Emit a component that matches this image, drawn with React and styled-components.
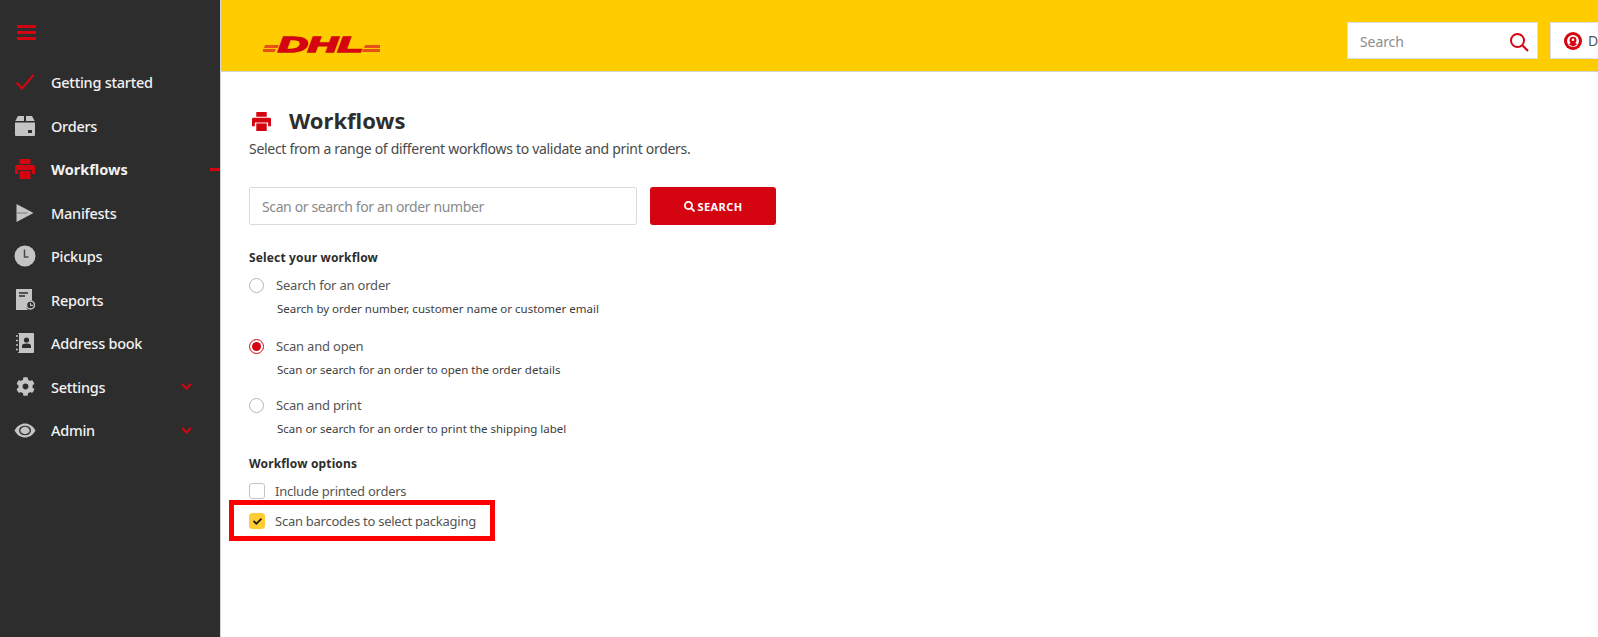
import React from 'react';
import styled, { createGlobalStyle } from 'styled-components';
import { FaSearch, FaCog, FaCheck } from 'react-icons/fa';

const FONT = '"Noto Sans", "Open Sans", sans-serif';
const RED = '#d40511';
const GREY_ICON = '#c4c4c4';

const GlobalStyle = createGlobalStyle`
  html, body {
    margin: 0;
    padding: 0;
    height: 100%;
    overflow: hidden;
    background: #fff;
    font-family: ${FONT};
  }
  * { box-sizing: border-box; }
`;

const Page = styled.div`
  position: relative;
  display: flex;
  width: 1598px;
  height: 637px;
  overflow: hidden;
`;

const Sidebar = styled.nav`
  flex: none;
  width: 221px;
  height: 100%;
  background: #2d2d2d;
  border-right: 1px solid #d6d6d6;
  padding-top: 24px;
`;

const MenuButton = styled.div`
  display: flex;
  flex-direction: column;
  gap: 3px;
  width: 19px;
  margin: 1px 0 20.5px 17px;
  span {
    height: 3px;
    background: ${RED};
  }
`;

const NavItem = styled.div`
  position: relative;
  display: flex;
  align-items: center;
  height: 43.5px;
  padding-left: 14px;
  color: #f2f2f2;
  font-size: 14.5px;
  font-weight: ${props => (props.$active ? 700 : 500)};
  letter-spacing: ${props => (props.$active ? '0' : '-0.26px')};
`;

const NavIcon = styled.span`
  display: flex;
  align-items: center;
  justify-content: center;
  width: 22px;
  height: 24px;
  margin-right: 15px;
  color: ${props => (props.$red ? RED : GREY_ICON)};
`;

const NavLabel = styled.span`
  flex: 1;
`;

const ChevronWrap = styled.span`
  display: flex;
  margin-right: 28px;
`;

const ActiveTick = styled.span`
  position: absolute;
  right: 0;
  top: 20px;
  width: 10px;
  height: 3px;
  background: ${RED};
`;

const Main = styled.div`
  flex: 1;
  min-width: 0;
  display: flex;
  flex-direction: column;
`;

const Header = styled.header`
  display: flex;
  align-items: flex-start;
  justify-content: space-between;
  height: 72px;
  flex: none;
  background: #ffcc00;
  border-bottom: 1px solid #d3d3d3;
  padding: 22px 0 0 42px;
  overflow: hidden;
`;

const Logo = styled.svg`
  display: block;
  margin-top: 14px;
`;

const HeaderRight = styled.div`
  display: flex;
  gap: 12px;
  width: 251px;
  flex: none;
  margin-left: auto;
`;

const HeaderBox = styled.div`
  flex: none;
  display: flex;
  align-items: center;
  height: 37px;
  background: #fff;
  border: 1px solid #d8dfe8;
  color: #555;
  font-size: 14px;
`;

const HeaderSearch = styled(HeaderBox)`
  width: 191px;
  justify-content: space-between;
  padding: 2px 8px 0 12px;
  color: #8c8c8c;
  letter-spacing: -0.1px;
`;

const UserBox = styled(HeaderBox)`
  width: 80px;
  padding-left: 13px;
  gap: 6px;
`;

const Content = styled.main`
  padding: 35px 0 0 28px;
`;

const TitleRow = styled.div`
  display: flex;
  align-items: center;
  height: 26px;
  padding-left: 3px;
`;

const TitleIcon = styled.span`
  display: flex;
  width: 37px;
  margin-top: 2px;
  color: ${RED};
`;

const Title = styled.h1`
  margin: 0;
  font-size: 22px;
  line-height: 26px;
  font-weight: 700;
  color: #2d2d2d;
`;

const Subtitle = styled.p`
  margin: 0;
  padding-top: 6px;
  font-size: 14px;
  line-height: 20px;
  letter-spacing: -0.3px;
  color: #4a4a4a;
`;

const SearchRow = styled.div`
  display: flex;
  gap: 13px;
  margin-top: 28px;
`;

const OrderInput = styled.div`
  width: 388px;
  height: 38px;
  display: flex;
  align-items: center;
  padding-left: 12px;
  border: 1px solid #d8dce2;
  border-radius: 2px;
  color: #8a8a8a;
  font-size: 14px;
  letter-spacing: -0.38px;
`;

const SearchButton = styled.div`
  width: 126px;
  height: 38px;
  display: flex;
  align-items: center;
  justify-content: center;
  gap: 3px;
  background: ${RED};
  border-radius: 3px;
  color: #fff;
  font-size: 11px;
  font-weight: 700;
  letter-spacing: 0.4px;
`;

const SectionTitle = styled.div`
  font-size: 12px;
  line-height: 16px;
  font-weight: 700;
  color: #2d2d2d;
  letter-spacing: 0.15px;
  margin-top: ${props => props.$top}px;
`;

const RadioOption = styled.div`
  display: grid;
  grid-template-columns: 27px 1fr;
  align-items: center;
  row-gap: 7px;
  margin-top: ${props => props.$top}px;
`;

const RadioMark = styled.span`
  width: 15px;
  height: 15px;
  border-radius: 50%;
  border: 1px solid ${props => (props.$on ? RED : '#b5b5b5')};
  display: flex;
  align-items: center;
  justify-content: center;
  &::after {
    content: '';
    display: ${props => (props.$on ? 'block' : 'none')};
    width: 9px;
    height: 9px;
    border-radius: 50%;
    background: ${RED};
  }
`;

const RadioLabel = styled.span`
  font-size: 13px;
  line-height: 18px;
  letter-spacing: -0.2px;
  color: #555;
`;

const RadioHint = styled.span`
  grid-column: 2;
  padding-left: 1px;
  font-size: 11.5px;
  line-height: 16px;
  color: #3c3c3c;
`;

const CheckRow = styled.div`
  display: flex;
  align-items: center;
  gap: 10px;
  height: 18px;
  margin-top: ${props => props.$top}px;
  font-size: 13px;
  letter-spacing: -0.25px;
  color: #555;
`;

const CheckMark = styled.span`
  flex: none;
  width: 16px;
  height: 16px;
  border-radius: 3px;
  display: flex;
  align-items: center;
  justify-content: center;
  color: #1a1a1a;
  background: ${props => (props.$on ? '#ffcc33' : '#fff')};
  border: 1px solid ${props => (props.$on ? '#ffcc33' : '#c4c4c4')};
`;

// annotation drawn on top of the screenshot
const Highlight = styled.div`
  position: absolute;
  left: 229px;
  top: 500px;
  width: 266px;
  height: 41px;
  border: 5px solid #fe0000;
  pointer-events: none;
`;

const Chevron = () => (
  <svg width="11" height="7" viewBox="0 0 11 7" fill="none">
    <path d="M1 1l4.5 4.5L10 1" stroke={RED} strokeWidth="2" />
  </svg>
);

const CheckIcon = () => (
  <svg width="20" height="16" viewBox="0 0 20 16" fill="none">
    <path d="M1.5 8.500l5.500 6L18.500 1" stroke={RED} strokeWidth="2" />
  </svg>
);

const PrinterIcon = ({ size }) => (
  <svg width={size} height={size} viewBox="0 0 20 20" fill={RED}>
    <path d="M4.500 0h11v5h-11zM1.500 6h17A1.500 1.500 0 0 1 20 7.500V15h-3v-4H3v4H0V7.500A1.500 1.500 0 0 1 1.500 6z" />
    <path d="M4.500 12h11v8h-11z" />
  </svg>
);

const BoxIcon = () => (
  <svg width="20" height="20" viewBox="0 0 20 20" fill={GREY_ICON}>
    <path d="M3 0h6v5H0.300zM11 0h6l2.700 5H11zM0 6.500h20V19a1 1 0 0 1-1 1H1a1 1 0 0 1-1-1z" />
    <rect x="13" y="14" width="4" height="3" fill="#2d2d2d" />
  </svg>
);

const SendIcon = () => (
  <svg width="18" height="18" viewBox="0 0 18 18">
    <path d="M0.500 0L17.500 9 0.500 18z" fill={GREY_ICON} />
    <path d="M0.500 9h11" stroke="#7a7a7a" strokeWidth="1" />
  </svg>
);

const ClockIcon = () => (
  <svg width="22" height="22" viewBox="0 0 22 22">
    <circle cx="11" cy="11" r="10.500" fill={GREY_ICON} />
    <path d="M10.500 4.500V12h4" fill="none" stroke="#4a4a4a" strokeWidth="1.500" />
  </svg>
);

const ReportIcon = () => (
  <svg width="19" height="21" viewBox="0 0 19 21">
    <path d="M0 0h16v11.500a5.500 5.500 0 0 0-4 9.500H0z" fill={GREY_ICON} />
    <path d="M3 4h9M3 7h6" stroke="#2d2d2d" strokeWidth="1.600" />
    <circle cx="14.500" cy="16" r="4" fill="none" stroke={GREY_ICON} strokeWidth="1.500" />
    <path d="M14.500 14v2.400h2.400" fill="none" stroke={GREY_ICON} strokeWidth="1.100" />
  </svg>
);

const AddressIcon = () => (
  <svg width="18" height="20" viewBox="0 0 18 20">
    <rect x="2" y="0" width="16" height="20" rx="1" fill={GREY_ICON} />
    <path d="M0 3h4M0 7.500h4M0 12h4M0 16.500h4" stroke={GREY_ICON} strokeWidth="1.600" />
    <path d="M2.500 1v18" stroke="#2d2d2d" strokeWidth="1" />
    <circle cx="10.500" cy="7" r="2.600" fill="#2d2d2d" />
    <path d="M6 15v-2c0-1.600 2-2.400 4.500-2.400S15 11.400 15 13v2z" fill="#2d2d2d" />
  </svg>
);

const EyeIcon = () => (
  <svg width="22" height="15" viewBox="0 0 22 15">
    <path d="M0.500 7.500C3.500 2.500 7 0.500 11 0.500s7.500 2 10.500 7c-3 5-6.500 7-10.500 7s-7.500-2-10.500-7z" fill={GREY_ICON} />
    <ellipse cx="11" cy="7.500" rx="6" ry="4.800" fill="#2d2d2d" />
    <ellipse cx="11" cy="7.500" rx="4.600" ry="3.700" fill={GREY_ICON} />
  </svg>
);

const HeaderSearchIcon = () => (
  <svg width="20" height="20" viewBox="0 0 20 20" fill="none" stroke={RED}>
    <circle cx="8.500" cy="8.500" r="6.500" strokeWidth="2" />
    <path d="M13.500 13.500L19 19" strokeWidth="2.200" />
  </svg>
);

const UserIcon = () => (
  <svg width="18" height="18" viewBox="0 0 18 18">
    <circle cx="9" cy="9" r="9" fill={RED} />
    <circle cx="9" cy="9" r="6" fill="#fff" />
    <circle cx="9" cy="8.200" r="3.400" fill={RED} />
    <circle cx="9" cy="7.700" r="1.300" fill="#fff" />
    <path d="M5 12.500c1-1.500 2.300-2 4-2s3 0.500 4 2L9 14.500z" fill={RED} />
  </svg>
);

const DhlLogo = () => (
  <Logo width="117" height="17" viewBox="0 0 117 17">
    <path d="M2 9h14l-1.500 3H1zM0 13h13l-1.500 3H0zM102 9h15v3H101zM100 13h17v3H99z" fill="#e8501a" />
    <text
      x="15"
      y="16"
      fontFamily='"Liberation Sans", sans-serif'
      fontSize="22"
      fontWeight="700"
      fontStyle="italic"
      fill={RED}
      stroke={RED}
      strokeWidth="1.600"
      textLength="85"
      lengthAdjust="spacingAndGlyphs"
    >
      DHL
    </text>
  </Logo>
);

const navItems = [
  { label: 'Getting started', icon: <CheckIcon />, red: true },
  { label: 'Orders', icon: <BoxIcon /> },
  { label: 'Workflows', icon: <PrinterIcon size={20} />, red: true, active: true },
  { label: 'Manifests', icon: <SendIcon /> },
  { label: 'Pickups', icon: <ClockIcon /> },
  { label: 'Reports', icon: <ReportIcon /> },
  { label: 'Address book', icon: <AddressIcon /> },
  { label: 'Settings', icon: <FaCog size={19} />, more: true },
  { label: 'Admin', icon: <EyeIcon />, more: true },
];

const workflows = [
  { label: 'Search for an order', hint: 'Search by order number, customer name or customer email', top: 10 },
  { label: 'Scan and open', hint: 'Scan or search for an order to open the order details', top: 20, on: true },
  { label: 'Scan and print', hint: 'Scan or search for an order to print the shipping label', top: 18 },
];

const App = () => (
  <Page>
    <GlobalStyle />
    <Sidebar>
      <MenuButton>
        <span />
        <span />
        <span />
      </MenuButton>
      {navItems.map(item => (
        <NavItem key={item.label} $active={item.active}>
          <NavIcon $red={item.red}>{item.icon}</NavIcon>
          <NavLabel>{item.label}</NavLabel>
          {item.more && (
            <ChevronWrap>
              <Chevron />
            </ChevronWrap>
          )}
          {item.active && <ActiveTick />}
        </NavItem>
      ))}
    </Sidebar>
    <Main>
      <Header>
        <DhlLogo />
        <HeaderRight>
          <HeaderSearch>
            Search
            <HeaderSearchIcon />
          </HeaderSearch>
          <UserBox>
            <UserIcon />
            D
          </UserBox>
        </HeaderRight>
      </Header>
      <Content>
        <TitleRow>
          <TitleIcon>
            <PrinterIcon size={19} />
          </TitleIcon>
          <Title>Workflows</Title>
        </TitleRow>
        <Subtitle>Select from a range of different workflows to validate and print orders.</Subtitle>
        <SearchRow>
          <OrderInput>Scan or search for an order number</OrderInput>
          <SearchButton>
            <FaSearch size={11} />
            SEARCH
          </SearchButton>
        </SearchRow>
        <SectionTitle $top={25}>Select your workflow</SectionTitle>
        {workflows.map(flow => (
          <RadioOption key={flow.label} $top={flow.top}>
            <RadioMark $on={flow.on} />
            <RadioLabel>{flow.label}</RadioLabel>
            <RadioHint>{flow.hint}</RadioHint>
          </RadioOption>
        ))}
        <SectionTitle $top={19}>Workflow options</SectionTitle>
        <CheckRow $top={10}>
          <CheckMark />
          Include printed orders
        </CheckRow>
        <CheckRow $top={12}>
          <CheckMark $on>
            <FaCheck size={9} />
          </CheckMark>
          Scan barcodes to select packaging
        </CheckRow>
      </Content>
    </Main>
    <Highlight />
  </Page>
);

export default App;
